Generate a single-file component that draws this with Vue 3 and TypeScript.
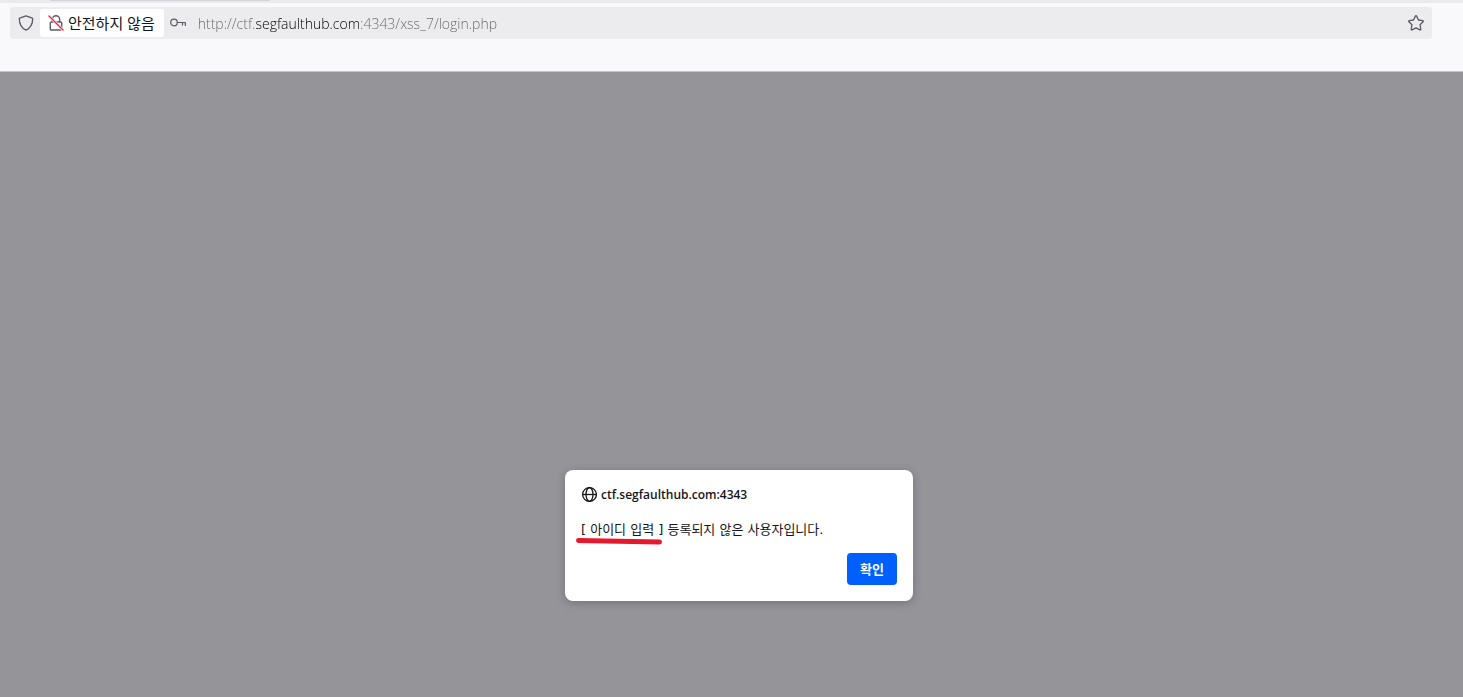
<script setup lang="ts">
import { ref } from 'vue'

const address = ref<string>('http://ctf.segfaulthub.com:4343/xss_7/login.php')
const host = 'ctf.segfaulthub.com:4343'
const userLabel = '[ 아이디 입력 ]'
const message = '등록되지 않은 사용자입니다.'
</script>

<template>
  <div class="browser">
    <header class="toolbar">
      <div class="tab-strip"><span class="tab-edge"></span></div>
      <form class="url-bar" @submit.prevent>
        <button class="icon-button shield" type="button" aria-label="추적 방지">
          <svg width="16" height="16" viewBox="0 0 16 16" fill="none" stroke="#5b5b63" stroke-width="1.3" stroke-linejoin="round">
            <path d="M8 .8 14.3 3.1c.3.1.4.3.4.6 0 5.4-1.7 9-6.7 11.5C3 12.7 1.3 9.1 1.3 3.7c0-.3.1-.5.4-.6Z" />
          </svg>
        </button>
        <button class="security" type="button">
          <svg width="16" height="16" viewBox="0 0 16 16" fill="none">
            <path d="M4.3 7V4.4a3.7 3.7 0 0 1 7.4 0V7M3.3 7h9.4a1 1 0 0 1 1 1v6a1 1 0 0 1-1 1H3.3a1 1 0 0 1-1-1V8a1 1 0 0 1 1-1Z" stroke="#5b5b63" stroke-width="1.4" />
            <path d="m1 1 14 14" stroke="#fff" stroke-width="2.6" />
            <path d="m1 1 14 14" stroke="#e8284f" stroke-width="1.4" stroke-linecap="round" />
          </svg>
          <span>안전하지 않음</span>
        </button>
        <button class="icon-button key" type="button" aria-label="저장된 로그인">
          <svg width="16" height="16" viewBox="0 0 16 16" fill="none" stroke="#5b5b63" stroke-width="1.2" stroke-linecap="round" stroke-linejoin="round">
            <circle cx="4" cy="7.5" r="3.3" />
            <path d="M7.3 7.5h8v3M12.5 7.500v2.500" />
          </svg>
        </button>
        <input v-model="address" class="address" type="text" aria-label="주소" spellcheck="false" />
        <button class="icon-button star" type="button" aria-label="북마크">
          <svg width="16" height="16" viewBox="0 0 16 16" fill="none" stroke="#5b5b63" stroke-width="1.3" stroke-linejoin="round">
            <path d="M7.4 1.1a.7.7 0 0 1 1.2 0l1.9 3.9 4.2.6c.6.1.8.7.4 1.1L12 9.7l.8 4.5c.1.6-.4.9-.9.7L8 12.9l-3.9 2c-.5.2-1-.1-.9-.7L4 9.7.9 6.7c-.4-.4-.2-1 .4-1.1L5.5 5Z" />
          </svg>
        </button>
      </form>
    </header>

    <main class="page">
      <section class="dialog" role="alertdialog" aria-labelledby="dialog-host" aria-describedby="dialog-message">
        <h1 id="dialog-host" class="host">
          <svg width="16" height="16" viewBox="0 0 16 16" fill="none" stroke="#15141a" stroke-width="1.3">
            <circle cx="8.500" cy="7.500" r="6.900" />
            <ellipse cx="8.500" cy="7.500" rx="3.500" ry="6.900" />
            <path d="M1.500 7.500h14" />
          </svg>
          <span>{{ host }}</span>
        </h1>
        <p id="dialog-message" class="message">
          <span class="marked">{{ userLabel }}<svg class="marker" viewBox="0 0 86 8" aria-hidden="true">
            <path d="M2.500 3.500 Q40 4.200 83.500 5" fill="none" stroke="#e5192d" stroke-width="5" stroke-linecap="round" />
          </svg></span> {{ message }}
        </p>
        <button class="confirm" type="button">확인</button>
      </section>
    </main>
  </div>
</template>

<style>
body {
  margin: 0;
}
</style>

<style scoped>
.browser {
  display: flex;
  flex-direction: column;
  min-height: 100vh;
  color: #15141a;
  font-family: "Open Sans", "Noto Sans CJK KR", sans-serif;
}

.toolbar {
  padding-bottom: 32px;
  background: #f9f9fb;
  border-bottom: 1px solid #c6c6ca;
}

.tab-strip {
  height: 3px;
  margin-bottom: 4px;
  background: #eaeaed;
}

.tab-edge {
  display: block;
  width: 220px;
  height: 1px;
  margin-left: 50px;
  background: #d4d4d8;
}

.url-bar {
  display: flex;
  align-items: center;
  height: 32px;
  margin: 0 31px 0 10px;
  background: #ececee;
  border-radius: 4px;
}

button {
  font-family: inherit;
  color: inherit;
  border: 0;
  cursor: pointer;
}

svg {
  display: block;
  flex: none;
}

.icon-button {
  flex: none;
  padding: 8px;
  background: none;
}

.shield {
  padding-right: 6px;
}

.key {
  padding: 8px 6px;
}

.security {
  display: flex;
  flex: none;
  align-items: center;
  gap: 4px;
  height: 28px;
  padding: 0 9px 0 8px;
  background: #fff;
  border-radius: 3px;
  font-size: 15px;
  line-height: 20px;
}

/* The gradient is clipped to the text so that the host name stands out. */
.address {
  flex: 1;
  min-width: 0;
  height: 32px;
  padding: 0 6px;
  border: 0;
  outline: 0;
  font-family: "Open Sans", sans-serif;
  font-size: 14px;
  font-weight: 300;
  color: transparent;
  caret-color: #15141a;
  background: linear-gradient(to right, #66666c 64px, #000 64px, #000 168px, #66666c 168px);
  background-clip: text;
  -webkit-background-clip: text;
}

.page {
  display: flex;
  flex: 1;
  align-items: flex-end;
  justify-content: center;
  padding: 24px 0 96px 15px;
  background: #959499;
}

.dialog {
  display: flex;
  flex-direction: column;
  box-sizing: border-box;
  width: 348px;
  padding: 16px;
  background: #fff;
  border-radius: 8px;
  box-shadow: 0 2px 8px rgba(40, 40, 50, 0.3);
}

.host {
  display: flex;
  align-items: center;
  gap: 4px;
  margin: 0 0 16px;
  font-size: 12px;
  font-weight: 600;
  line-height: 18px;
}

.message {
  margin: 0 0 14px;
  font-family: "DejaVu Sans", "Noto Sans CJK KR", sans-serif;
  font-size: 13px;
  line-height: 19px;
}

.marked {
  position: relative;
}

.marker {
  position: absolute;
  top: 100%;
  left: -5px;
  width: 86px;
  height: 8px;
}

.confirm {
  align-self: flex-end;
  min-width: 50px;
  height: 32px;
  padding: 0 12px 2px;
  color: #fff;
  background: #0060fe;
  border-radius: 4px;
  font-size: 13px;
  font-weight: 600;
}
</style>
